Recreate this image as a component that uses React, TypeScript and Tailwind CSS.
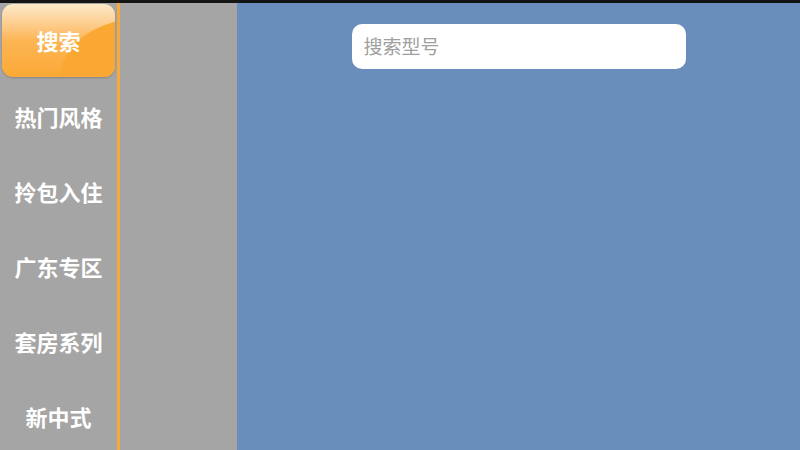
import React from "react";

const menu = ["搜索", "热门风格", "拎包入住", "广东专区", "套房系列", "新中式"];

export default function App() {
  return (
    <div
      className="flex h-[450px] w-[800px] flex-col overflow-hidden bg-[#a5a5a5]"
      style={{ fontFamily: '"Noto Sans CJK SC", "Noto Sans", sans-serif' }}
    >
      <div className="h-[3px] w-full shrink-0 bg-[#141414]" />
      <div className="flex min-h-0 flex-1">
        <nav className="flex w-[117px] shrink-0 flex-col pt-[1px]">
          {menu.map((label, i) =>
            i === 0 ? (
              <div key={label} className="flex h-[75px] shrink-0 px-[2px] pb-[2px]">
                <div className="relative flex flex-1 items-center justify-center overflow-hidden rounded-[11px] bg-gradient-to-b from-[#fde9c9] via-[#fcb553] to-[#fba935] shadow-[0_1px_2px_rgba(0,0,0,0.2)]">
                  <div className="absolute left-[58px] top-[14px] h-[120px] w-[170px] rounded-[50%] bg-[#fba733]" />
                  <span className="relative text-[22px] font-bold text-white">{label}</span>
                </div>
              </div>
            ) : (
              <div
                key={label}
                className="flex h-[75px] shrink-0 items-center justify-center text-[22px] font-bold text-white"
              >
                {label}
              </div>
            )
          )}
        </nav>
        <div className="w-[3px] shrink-0 bg-[#f9a83a]" />
        <div className="w-[117px] shrink-0 bg-[#a5a5a5]" />
        <main className="flex flex-1 justify-center bg-[#6a8ebc] pt-[21px]">
          <div className="flex h-[45px] w-[334px] items-center rounded-[10px] bg-white px-[12px]">
            <span className="text-[19px] text-[#a0a0a0]">搜索型号</span>
          </div>
        </main>
      </div>
    </div>
  );
}
